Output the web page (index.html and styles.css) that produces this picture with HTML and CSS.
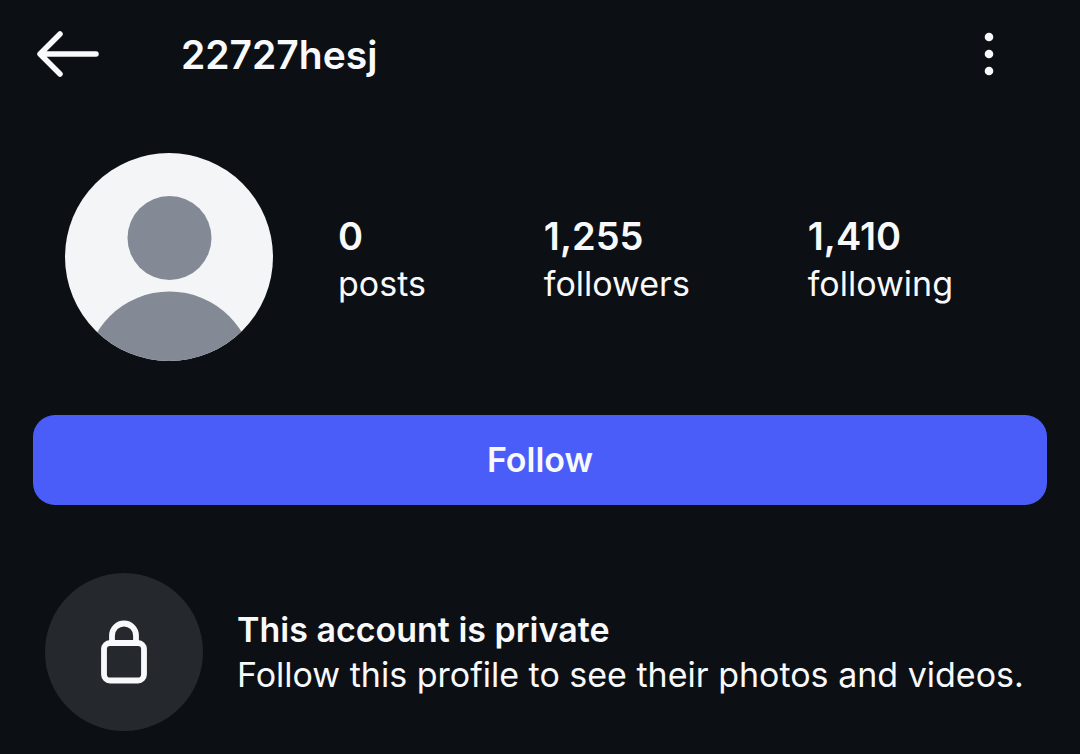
FILE: index.html
```html
<!DOCTYPE html>
<html lang="en">
  <head>
    <meta charset="UTF-8" />
    <meta name="viewport" content="width=device-width, initial-scale=1.0" />
    <title>22727hesj</title>
    <link rel="stylesheet" href="styles.css" />
  </head>

  <body>
    <header class="topbar">
      <button class="icon-btn" type="button" aria-label="Back">
        <svg class="icon-back" viewBox="0 0 64 48">
          <path d="M60 24H5M24 4L4 24l20 20" />
        </svg>
      </button>
      <h1 class="username">22727hesj</h1>
      <button class="icon-btn" type="button" aria-label="More options">
        <svg class="icon-more" viewBox="0 0 10 44">
          <circle cx="5" cy="5" r="4.3" />
          <circle cx="5" cy="22" r="4.3" />
          <circle cx="5" cy="39" r="4.3" />
        </svg>
      </button>
    </header>

    <main>
      <section class="profile">
        <svg class="avatar" viewBox="0 0 208 208" role="img" aria-label="Profile picture">
          <clipPath id="avatar-clip"><circle cx="104" cy="104" r="104" /></clipPath>
          <g clip-path="url(#avatar-clip)">
            <rect class="avatar-bg" width="208" height="208" />
            <circle class="avatar-fg" cx="104.5" cy="85" r="42" />
            <circle class="avatar-fg" cx="104.5" cy="223" r="84.5" />
          </g>
        </svg>
        <ul class="stats">
          <li><a href="#posts"><strong>0</strong>posts</a></li>
          <li><a href="#followers"><strong>1,255</strong>followers</a></li>
          <li><a href="#following"><strong>1,410</strong>following</a></li>
        </ul>
      </section>

      <button class="follow-btn" type="button">Follow</button>

      <section class="private">
        <div class="lock">
          <svg class="icon-lock" viewBox="0 0 46 64">
            <path d="M11 22V15.500a12 12 0 0 1 24 0V22" />
            <rect x="3" y="23" width="40" height="37.500" rx="6" />
          </svg>
        </div>
        <div class="private-text">
          <h2>This account is private</h2>
          <p>Follow this profile to see their photos and videos.</p>
        </div>
      </section>
    </main>
  </body>
</html>
```

FILE: styles.css
```css
* {
  margin: 0;
  padding: 0;
  box-sizing: border-box;
}

body {
  font-family: Inter, Roboto, sans-serif;
  font-size: 34px;
  line-height: 45px;
  background: #0c0f14;
  color: #f8f9fb;
}

button {
  border: none;
  font: inherit;
  color: inherit;
  cursor: pointer;
}

svg {
  display: block;
}

.topbar {
  display: flex;
  align-items: center;
  height: 108px;
  padding: 0 86px 0 36px;
}

.icon-btn {
  background: none;
}

.icon-back {
  width: 64px;
  height: 48px;
  fill: none;
  stroke: #f8f9fb;
  stroke-width: 5.5;
  stroke-linecap: round;
  stroke-linejoin: round;
}

.icon-more {
  width: 10px;
  height: 44px;
  fill: #f8f9fb;
}

.username {
  flex: 1;
  margin-left: 81px;
  font-size: 39px;
  font-weight: 600;
}

.profile {
  display: flex;
  align-items: center;
  padding: 45px 64px 54px 65px;
}

.avatar {
  flex-shrink: 0;
  width: 208px;
  height: 208px;
}

.avatar-bg {
  fill: #f3f5f7;
}

.avatar-fg {
  fill: #848a95;
}

.stats {
  flex: 1;
  display: flex;
  justify-content: space-between;
  padding: 4px 63px 0 65px;
  list-style: none;
}

.stats a {
  color: inherit;
  text-decoration: none;
}

.stats strong {
  display: block;
  margin-bottom: 2px;
  font-size: 38px;
  font-weight: 600;
  line-height: 46px;
}

.follow-btn {
  display: block;
  width: calc(100% - 66px);
  height: 90px;
  margin: 0 33px;
  padding-bottom: 2px;
  border-radius: 22px;
  background: #4a5df9;
  font-weight: 600;
}

.private {
  display: flex;
  align-items: center;
  gap: 34px;
  padding: 68px 45px 23px;
}

.lock {
  display: flex;
  flex-shrink: 0;
  align-items: center;
  justify-content: center;
  width: 158px;
  height: 158px;
  border-radius: 50%;
  background: #25282d;
}

.icon-lock {
  width: 46px;
  height: 64px;
  fill: none;
  stroke: #f8f9fb;
  stroke-width: 5.8;
}

.private-text h2 {
  font-size: 34px;
  font-weight: 600;
}
```
